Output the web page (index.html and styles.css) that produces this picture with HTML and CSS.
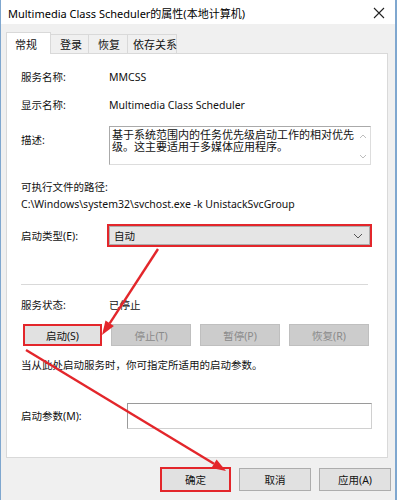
FILE: index.html
```html
<!DOCTYPE html>
<html lang="zh-CN">
<head>
<meta charset="utf-8">
<title>Multimedia Class Scheduler的属性</title>
<link rel="stylesheet" href="styles.css">
</head>
<body>
<div class="window">
  <div class="titlebar">
    <span class="title">Multimedia Class Scheduler的属性(本地计算机)</span>
    <svg class="close" width="12" height="12" viewBox="0 0 12 12"><path d="M1 1L11 11M11 1L1 11" stroke="#222" stroke-width="1.1" fill="none"/></svg>
  </div>
  <div class="body">
    <div class="tabs">
      <div class="tab active">常规</div>
      <div class="tab">登录</div>
      <div class="tab">恢复</div>
      <div class="tab">依存关系</div>
    </div>
    <div class="panel">
      <div class="row r1"><span class="label">服务名称:</span><span class="value">MMCSS</span></div>
      <div class="row r2"><span class="label">显示名称:</span><span class="value">Multimedia Class Scheduler</span></div>
      <div class="row r3">
        <span class="label desc-label">描述:</span>
        <div class="textarea">
          <div class="ta-text">基于系统范围内的任务优先级启动工作的相对优先级。这主要适用于多媒体应用程序。</div>
          <div class="ta-scroll">
            <svg width="8" height="6" viewBox="0 0 8 6"><path d="M1 5L4 2L7 5" stroke="#bdbdbd" fill="none"/></svg>
            <svg width="8" height="6" viewBox="0 0 8 6"><path d="M1 1L4 4L7 1" stroke="#bdbdbd" fill="none"/></svg>
          </div>
        </div>
      </div>
      <div class="row r4"><span>可执行文件的路径:</span></div>
      <div class="row r5"><span class="path">C:\Windows\system32\svchost.exe -k UnistackSvcGroup</span></div>
      <div class="row r6">
        <span class="label">启动类型(E):</span>
        <div class="select-hl">
          <div class="select"><span>自动</span>
            <svg width="10" height="6" viewBox="0 0 10 6"><path d="M1 1L5 5L9 1" stroke="#555" stroke-width="1" fill="none"/></svg>
          </div>
        </div>
      </div>
      <div class="sep"></div>
      <div class="row r7"><span class="label">服务状态:</span><span>已停止</span></div>
      <div class="btnrow">
        <div class="btn hl">启动(S)</div>
        <div class="btn disabled">停止(T)</div>
        <div class="btn disabled">暂停(P)</div>
        <div class="btn disabled">恢复(R)</div>
      </div>
      <div class="row r8"><span>当从此处启动服务时，你可指定所适用的启动参数。</span></div>
      <div class="row r9">
        <span class="label param-label">启动参数(M):</span>
        <div class="input"></div>
      </div>
    </div>
    <div class="footer">
      <div class="fbtn hl">确定</div>
      <div class="fbtn">取消</div>
      <div class="fbtn">应用(A)</div>
    </div>
  </div>
</div>
<svg class="arrows" width="397" height="500" viewBox="0 0 397 500">
  <line x1="158" y1="249" x2="109.7" y2="323.3" stroke="#e3262b" stroke-width="2.4"/>
  <polygon points="102,335 113.9,326.1 105.5,320.6" fill="#e3262b"/>
  <line x1="26" y1="350" x2="214" y2="463.8" stroke="#e3262b" stroke-width="2.4"/>
  <polygon points="226,471 211.4,468.1 216.6,459.5" fill="#e3262b"/>
</svg>
</body>
</html>
```
FILE: styles.css
```css
* { box-sizing: border-box; }
html, body { margin: 0; padding: 0; }
body {
  width: 397px;
  height: 500px;
  overflow: hidden;
  position: relative;
  font-family: "Noto Sans", "Noto Sans CJK SC", sans-serif;
  font-size: 10.5px;
  color: #111;
  background: #f0f0f0;
}
.window {
  width: 397px;
  height: 500px;
  border-left: 1px solid #7fa7cf;
  border-right: 2px solid #7fa7cf;
  background: #f0f0f0;
  display: flex;
  flex-direction: column;
}
.titlebar {
  height: 24px;
  background: #fff;
  display: flex;
  align-items: center;
  justify-content: space-between;
  padding: 1px 10px 0 7px;
}
.title { font-size: 11px; color: #000; }
.body { flex: 1; display: flex; flex-direction: column; padding-left: 5px; }
.tabs {
  display: flex;
  align-items: flex-end;
  height: 29px;
  padding-top: 8px;
}
.tab {
  height: 19px;
  padding: 0 0 0 9px;
  border: 1px solid #d9d9d9;
  border-bottom: none;
  margin-left: -1px;
  display: flex;
  align-items: center;
  background: #f0f0f0;
  white-space: nowrap;
  flex: none;
  font-size: 11px;
}
.tab:first-child { margin-left: 0; }
.tab.active {
  height: 22px;
  background: #fff;
  width: 45px;
  padding-left: 8px;
  position: relative;
  z-index: 1;
  margin-bottom: -1px;
}
.tabs .tab:nth-child(2) { width: 39px; }
.tabs .tab:nth-child(3) { width: 40px; }
.tabs .tab:nth-child(4) { width: 50px; padding-left: 5px; }
.panel {
  width: 382px;
  height: 405px;
  background: #fff;
  border: 1px solid #d9d9d9;
  padding: 15px 0 0 14px;
  display: flex;
  flex-direction: column;
}
.row { display: flex; align-items: center; line-height: 16px; }
.label { width: 88px; flex: none; }
.value, .path { font-size: 10.5px; }
.r2 { margin-top: 12px; }
.r3 { margin-top: 13px; align-items: flex-start; }
.desc-label { margin-top: 6px; }
.textarea {
  width: 262px;
  height: 39px;
  border: 1px solid #aaa;
  border-right-color: #ddd;
  border-bottom-color: #ddd;
  display: flex;
}
.ta-text { flex: 1; padding: 1px 0 0 2px; line-height: 12px; font-size: 11px; font-family: "Noto Sans CJK SC", sans-serif; }
.ta-scroll {
  width: 15px;
  flex: none;
  display: flex;
  flex-direction: column;
  justify-content: space-between;
  align-items: center;
  padding: 6px 0 4px;
}
.ta-scroll svg { display: block; }
.r4 { margin-top: 14px; }
.r5 { margin-top: 1px; }
.r6 { margin-top: 12px; }
.select-hl {
  margin-left: -2px;
  width: 265px;
  height: 23px;
  border: 2px solid #e3262b;
}
.select {
  height: 100%;
  background: #e5e5e5;
  border: 1px solid #adadad;
  display: flex;
  align-items: center;
  justify-content: space-between;
  padding: 0 6px 0 4px;
}
.sep {
  margin-top: 37px;
  width: 347px;
  height: 1px;
  background: #d9d9d9;
}
.r7 { margin-top: 12px; }
.btnrow { display: flex; gap: 9px; margin-top: 11px; margin-left: 2px; }
.btn {
  width: 80px;
  height: 22px;
  display: flex;
  align-items: center;
  justify-content: center;
  border: 1px solid #adadad;
  background: #e1e1e1;
}
.btn.hl { border: 2px solid #e3262b; width: 79px; }
.btn.disabled { background: #cccccc; border-color: #bfbfbf; color: #8a8a8a; }
.r8 { margin-top: 11px; }
.r9 { margin-top: 30px; }
.param-label { width: 106px; }
.input {
  width: 245px;
  height: 26px;
  border: 1px solid;
  border-color: #9a9a9a #d0d0d0 #d0d0d0 #9a9a9a;
  background: #fff;
}
.footer {
  display: flex;
  justify-content: flex-end;
  gap: 8px;
  padding: 10px 4px 0 0;
}
.fbtn {
  width: 72px;
  height: 23px;
  display: flex;
  align-items: center;
  justify-content: center;
  border: 1px solid #adadad;
  background: #e1e1e1;
}
.fbtn.hl { border: 2px solid #e3262b; width: 71px; height: 25px; margin-top: -1px; }
.arrows { position: absolute; left: 0; top: 0; pointer-events: none; }
```
